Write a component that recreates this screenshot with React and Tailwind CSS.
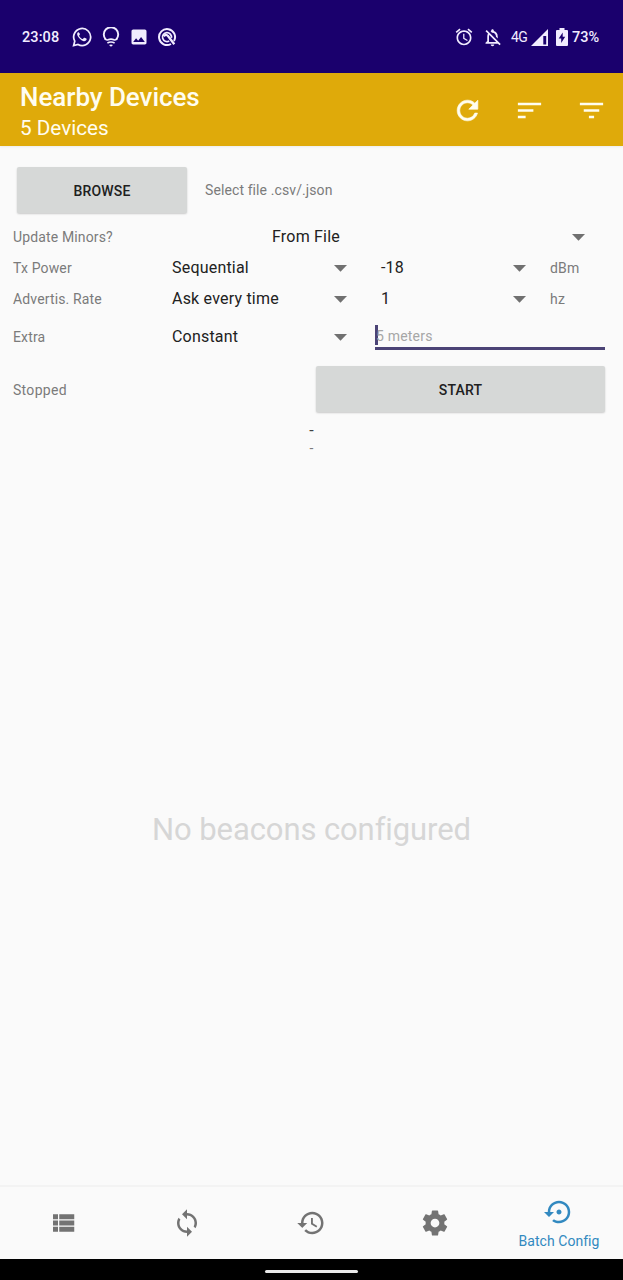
const REFRESH = "M17.65 6.35C16.2 4.9 14.21 4 12 4c-4.42 0-7.99 3.58-7.99 8s3.57 8 7.99 8c3.73 0 6.84-2.55 7.73-6h-2.08c-.82 2.33-3.04 4-5.65 4-3.31 0-6-2.69-6-6s2.69-6 6-6c1.66 0 3.14.69 4.22 1.78L13 11h7V4l-2.35 2.35z";
const SORT = "M3 18h6v-2H3v2zM3 6v2h18V6H3zm0 7h12v-2H3v2z";
const FILTER = "M10 18h4v-2h-4v2zM3 6v2h18V6H3zm3 7h12v-2H6v2z";
const LIST = "M4 14h4v-4H4v4zm0 5h4v-4H4v4zM4 9h4V5H4v4zm5 5h12v-4H9v4zm0 5h12v-4H9v4zM9 5v4h12V5H9z";
const SYNC = "M12 4V1L8 5l4 4V6c3.31 0 6 2.69 6 6 0 1.01-.25 1.97-.7 2.8l1.46 1.46C19.54 15.03 20 13.57 20 12c0-4.42-3.58-8-8-8zm0 14c-3.31 0-6-2.69-6-6 0-1.01.25-1.97.7-2.8L5.24 7.74C4.46 8.97 4 10.43 4 12c0 4.42 3.58 8 8 8v3l4-4-4-4v3z";
const HISTORY = "M13 3c-4.97 0-9 4.03-9 9H1l3.89 3.89.07.14L9 12H6c0-3.87 3.13-7 7-7s7 3.13 7 7-3.13 7-7 7c-1.93 0-3.68-.79-4.94-2.06l-1.42 1.42C8.27 19.99 10.51 21 13 21c4.97 0 9-4.03 9-9s-4.03-9-9-9zm-1 5v5l4.28 2.54.72-1.21-3.5-2.08V8H12z";
const SETTINGS = "M19.43 12.98c.04-.32.07-.64.07-.98s-.03-.66-.07-.98l2.11-1.65c.19-.15.24-.42.12-.64l-2-3.46c-.12-.22-.39-.3-.61-.22l-2.49 1c-.52-.4-1.08-.73-1.69-.98l-.38-2.65C14.46 2.18 14.25 2 14 2h-4c-.25 0-.46.18-.49.42l-.38 2.65c-.61.25-1.17.59-1.69.98l-2.49-1c-.23-.09-.49 0-.61.22l-2 3.46c-.13.22-.07.49.12.64l2.11 1.65c-.04.32-.07.65-.07.98s.03.66.07.98l-2.11 1.65c-.19.15-.24.42-.12.64l2 3.46c.12.22.39.3.61.22l2.49-1c.52.4 1.08.73 1.69.98l.38 2.65c.03.24.24.42.49.42h4c.25 0 .46-.18.49-.42l.38-2.65c.61-.25 1.17-.59 1.69-.98l2.49 1c.23.09.49 0 .61-.22l2-3.46c.12-.22.07-.49-.12-.64l-2.11-1.65zM12 15.5c-1.93 0-3.5-1.57-3.5-3.5s1.57-3.5 3.5-3.5 3.5 1.57 3.5 3.5-1.57 3.5-3.5 3.5z";
const RESTORE = "M14 12c0-1.1-.9-2-2-2s-2 .9-2 2 .9 2 2 2 2-.9 2-2zm-2-9c-4.97 0-9 4.03-9 9H0l4 4 4-4H5c0-3.87 3.13-7 7-7s7 3.13 7 7-3.13 7-7 7c-1.51 0-2.91-.49-4.06-1.3l-1.42 1.44C8.04 20.3 9.94 21 12 21c4.97 0 9-4.03 9-9s-4.03-9-9-9z";
const ALARM = "M22 5.72l-4.6-3.86-1.29 1.53 4.6 3.86L22 5.72zM7.88 3.39L6.6 1.86 2 5.71l1.29 1.53 4.59-3.85zM12.5 8H11v6l4.75 2.85.75-1.23-4-2.37V8zM12 4c-4.97 0-9 4.03-9 9s4.02 9 9 9c4.97 0 9-4.03 9-9s-4.03-9-9-9zm0 16c-3.87 0-7-3.13-7-7s3.13-7 7-7 7 3.13 7 7-3.13 7-7 7z";
const BELL_OFF = "M12 22c1.1 0 2-.9 2-2h-4c0 1.1.9 2 2 2zm0-15.5c2.49 0 4 2.02 4 4.500v.1l2 2V11c0-3.070-1.630-5.640-4.500-6.320V4c0-.83-.67-1.500-1.500-1.500s-1.500.67-1.500 1.500v.68c-.24.060-.47.150-.69.230l1.640 1.640c.18-.020.36-.050.550-.050zM5.410 3.350L4 4.760l2.810 2.810C6.290 8.570 6 9.740 6 11v5l-2 2v1h14.240l1.740 1.740 1.410-1.410L5.410 3.350zM16 17H8v-6c0-.68.120-1.320.340-1.900L16 16.760V17z";
const WHATSAPP_HANDSET = "M8.200 6.600c-.3-.6-.9-.5-1.300 0-1 1-1 2.700.1 4.400 1.500 2.500 3.700 4.600 6.300 5.700 1.600.7 3.400.2 4.100-1.300.4-.9.3-1.200-.3-1.500l-2-1c-.5-.2-.7-.1-1 .3l-.8 1c-.3.3-.5.300-.9.1-1.700-.8-2.900-2-3.800-3.600-.2-.4-.1-.6.2-.9.800-.9.9-1.100.6-1.700z";

function Icon({ d, className }) {
  return (
    <svg viewBox="0 0 24 24" className={className} fill="currentColor">
      <path d={d} />
    </svg>
  );
}

function Caret() {
  return (
    <svg viewBox="0 0 13 7" className="h-[7px] w-[13px] shrink-0" fill="#707070">
      <path d="M0 0h13L6.500 6.800z" />
    </svg>
  );
}

function StatusBar() {
  return (
    <header className="flex h-[73px] items-center bg-[#1a006d] pl-[22px] pr-[23px] pt-px text-[#f1ecff]">
      <span className="w-[50px] pt-px text-[14.500px] font-medium tracking-[0.1px]">23:08</span>
      <svg viewBox="0 0 24 24" className="size-5 shrink-0" fill="none">
        <path d="M2 22.200l1.300-5.200A10.200 10.200 0 1 1 7.200 20.900z" stroke="currentColor" strokeWidth="2.100" />
        <path d={WHATSAPP_HANDSET} fill="currentColor" />
      </svg>
      <svg viewBox="0 0 18 20" className="ml-[10px] h-5 w-[18px] shrink-0" fill="none" stroke="currentColor">
        <path d="M3.700 12.300A7.200 7.200 0 1 1 14.300 12.300" strokeWidth="1.900" />
        <path d="M2.600 11.300Q5 13.600 6 12.800Q9 11.500 12 12.800Q13 13.600 15.400 11.300" strokeWidth="1.700" />
        <path d="M5.400 16Q9 14 12.600 16" strokeWidth="1.600" />
        <path d="M7 18Q9 17 11 18L9 19.800z" fill="currentColor" stroke="none" />
      </svg>
      <svg viewBox="0 0 24 24" className="ml-[9px] size-5 shrink-0" fill="currentColor">
        <path d="M21 19V5c0-1.100-.9-2-2-2H5c-1.100 0-2 .9-2 2v14c0 1.100.9 2 2 2h14c1.100 0 2-.9 2-2zM8.500 13.500l2.500 3.010L14.500 12l4.500 6H5l3.500-4.500z" />
      </svg>
      <svg viewBox="0 0 20 20" className="ml-2 size-5 shrink-0" fill="none" stroke="currentColor">
        <path d="M14 17A8 8 0 1 1 17 14" strokeWidth="2" />
        <path d="M12.200 14A4.500 4.500 0 1 1 14.400 10.900" strokeWidth="1.700" />
        <path d="M6.800 9.300Q9 6.500 11 9L17.300 17.300" strokeWidth="2.300" />
      </svg>
      <div className="ml-auto flex items-center">
        <Icon d={ALARM} className="size-[20px]" />
        <Icon d={BELL_OFF} className="ml-[8px] size-[21px]" />
        <span className="ml-[8px] w-[20px] whitespace-nowrap pt-px text-[14px] tracking-[-0.6px]">4G</span>
        <svg viewBox="0 0 17 17" className="size-[17px]">
          <path d="M0 17L17 0V17z" fill="currentColor" />
          <path d="M12.300 7h2.900v8.500h-2.900z" fill="#1a006d" />
        </svg>
        <svg viewBox="0 0 12 18" className="ml-[8px] h-[18px] w-3" fill="currentColor">
          <path d="M1 2h2.500V0h5v2H11q1 0 1 1v14q0 1-1 1H1q-1 0-1-1V3q0-1 1-1z" />
          <path d="M6.700 4.500L2.700 10.500h2.500v4.500l4-6.200H6.700z" fill="#1a006d" />
        </svg>
        <span className="ml-[4px] w-[28px] whitespace-nowrap pt-px text-[14.500px] font-medium">73%</span>
      </div>
    </header>
  );
}

function AppBar() {
  return (
    <div className="flex h-[73px] items-center bg-[#dfaa0a] pl-[20px] text-[#fffdf0] shadow-[0_1px_2px_rgba(0,0,0,0.06)]">
      <div className="flex flex-col pt-[4px]">
        <h1 className="text-[26px] font-medium leading-[32px] tracking-[-0.05px]">Nearby Devices</h1>
        <p className="text-[20.700px] leading-[30px]">5 Devices</p>
      </div>
      <div className="ml-auto flex items-center gap-[31px] pr-[16px] pt-px">
        <svg viewBox="0 0 24 24" className="size-[31px]" fill="currentColor" stroke="currentColor" strokeWidth="0.500">
          <path d={REFRESH} />
        </svg>
        <Icon d={SORT} className="size-[31px]" />
        <Icon d={FILTER} className="size-[31px]" />
      </div>
    </div>
  );
}

function Label({ children }) {
  return <span className="w-[159px] shrink-0 pt-px text-[14px] tracking-[0.14px] text-[#7b7b7b]">{children}</span>;
}

function Select({ value, className }) {
  return (
    <div className={`flex shrink-0 items-center justify-between pt-px text-[16px] tracking-[0.2px] text-[#212121] ${className}`}>
      <span>{value}</span>
      <Caret />
    </div>
  );
}

function ConfigForm() {
  return (
    <main className="flex grow flex-col pl-[13px] pr-[18px] pt-[20px]">
      <div className="flex h-[47px] items-center pl-[4px]">
        <button className="h-[46px] w-[170px] rounded-[2px] bg-[#d6d8d7] pt-[3px] text-[14px] font-medium tracking-[0.2px] text-[#202020] shadow-[0_1px_2px_rgba(0,0,0,0.2)]">BROWSE</button>
        <span className="ml-[18px] pt-[2px] text-[14px] tracking-[0.1px] text-[#7b7b7b]">Select file .csv/.json</span>
      </div>
      <div className="mt-[8px] flex h-[31px] items-center">
        <Label>Update Minors?</Label>
        <Select value="From File" className="ml-[100px] w-[313px]" />
      </div>
      <div className="flex h-[31px] items-center">
        <Label>Tx Power</Label>
        <Select value="Sequential" className="w-[175px]" />
        <Select value="-18" className="ml-[34px] w-[145px]" />
        <span className="ml-[24px] pt-px text-[14px] tracking-[0.2px] text-[#7b7b7b]">dBm</span>
      </div>
      <div className="flex h-[31px] items-center">
        <Label>Advertis. Rate</Label>
        <Select value="Ask every time" className="w-[175px]" />
        <Select value="1" className="ml-[34px] w-[145px]" />
        <span className="ml-[24px] pt-px text-[14px] tracking-[0.2px] text-[#7b7b7b]">hz</span>
      </div>
      <div className="flex h-[45px] items-center">
        <Label>Extra</Label>
        <Select value="Constant" className="w-[175px]" />
        <div className="ml-[28px] mt-[2px] flex h-[25px] w-[230px] flex-col border-b-[3px] border-[#4b4376]">
          <div className="flex h-[20px] items-center border-l-[3px] border-[#4b4376]">
            <span className="-ml-[2px] pt-[2px] text-[14px] tracking-[0.2px] text-[#a6a6a6]">5 meters</span>
          </div>
        </div>
      </div>
      <div className="mt-[6px] flex h-[47px] items-center justify-between">
        <span className="pt-[3px] text-[14px] tracking-[0.3px] text-[#7b7b7b]">Stopped</span>
        <button className="h-[46px] w-[289px] rounded-[2px] bg-[#d6d8d7] pt-[3px] text-[14px] font-medium tracking-[0.2px] text-[#202020] shadow-[0_1px_2px_rgba(0,0,0,0.2)]">START</button>
      </div>
      <div className="ml-[5px] mt-[10px] flex flex-col items-center">
        <span className="text-[16px] leading-[18px] text-[#404040]">-</span>
        <span className="text-[14px] leading-[17px] text-[#7b7b7b]">-</span>
      </div>
      <p className="ml-[5px] mt-[354px] text-center text-[31px] leading-[38px] tracking-[-0.1px] text-[#d6d6d6]">No beacons configured</p>
    </main>
  );
}

function Tab({ d }) {
  return (
    <div className="flex w-[124px] items-center justify-center text-[#737373]">
      <Icon d={d} className="size-[30px]" />
    </div>
  );
}

function BottomNav() {
  return (
    <nav className="flex h-[74px] border-t-2 border-[#f3f3f3] bg-[#fafafa] pl-[1px]">
      <Tab d={LIST} />
      <Tab d={SYNC} />
      <Tab d={HISTORY} />
      <Tab d={SETTINGS} />
      <div className="flex w-[124px] flex-col items-center pt-[10px] text-[#3289c0]">
        <Icon d={RESTORE} className="size-[30px]" />
        <span className="mt-[4px] whitespace-nowrap text-[14px] leading-[20px] tracking-[0.05px]">Batch Config</span>
      </div>
    </nav>
  );
}

export default function App() {
  return (
    <div className="flex h-[1280px] w-[623px] flex-col overflow-hidden bg-[#fafafa] font-[Roboto,sans-serif]">
      <StatusBar />
      <AppBar />
      <ConfigForm />
      <BottomNav />
      <div className="flex h-[21px] justify-center bg-black pt-[11px]">
        <div className="h-[3px] w-[93px] rounded-full bg-[#e9e9e9]" />
      </div>
    </div>
  );
}
